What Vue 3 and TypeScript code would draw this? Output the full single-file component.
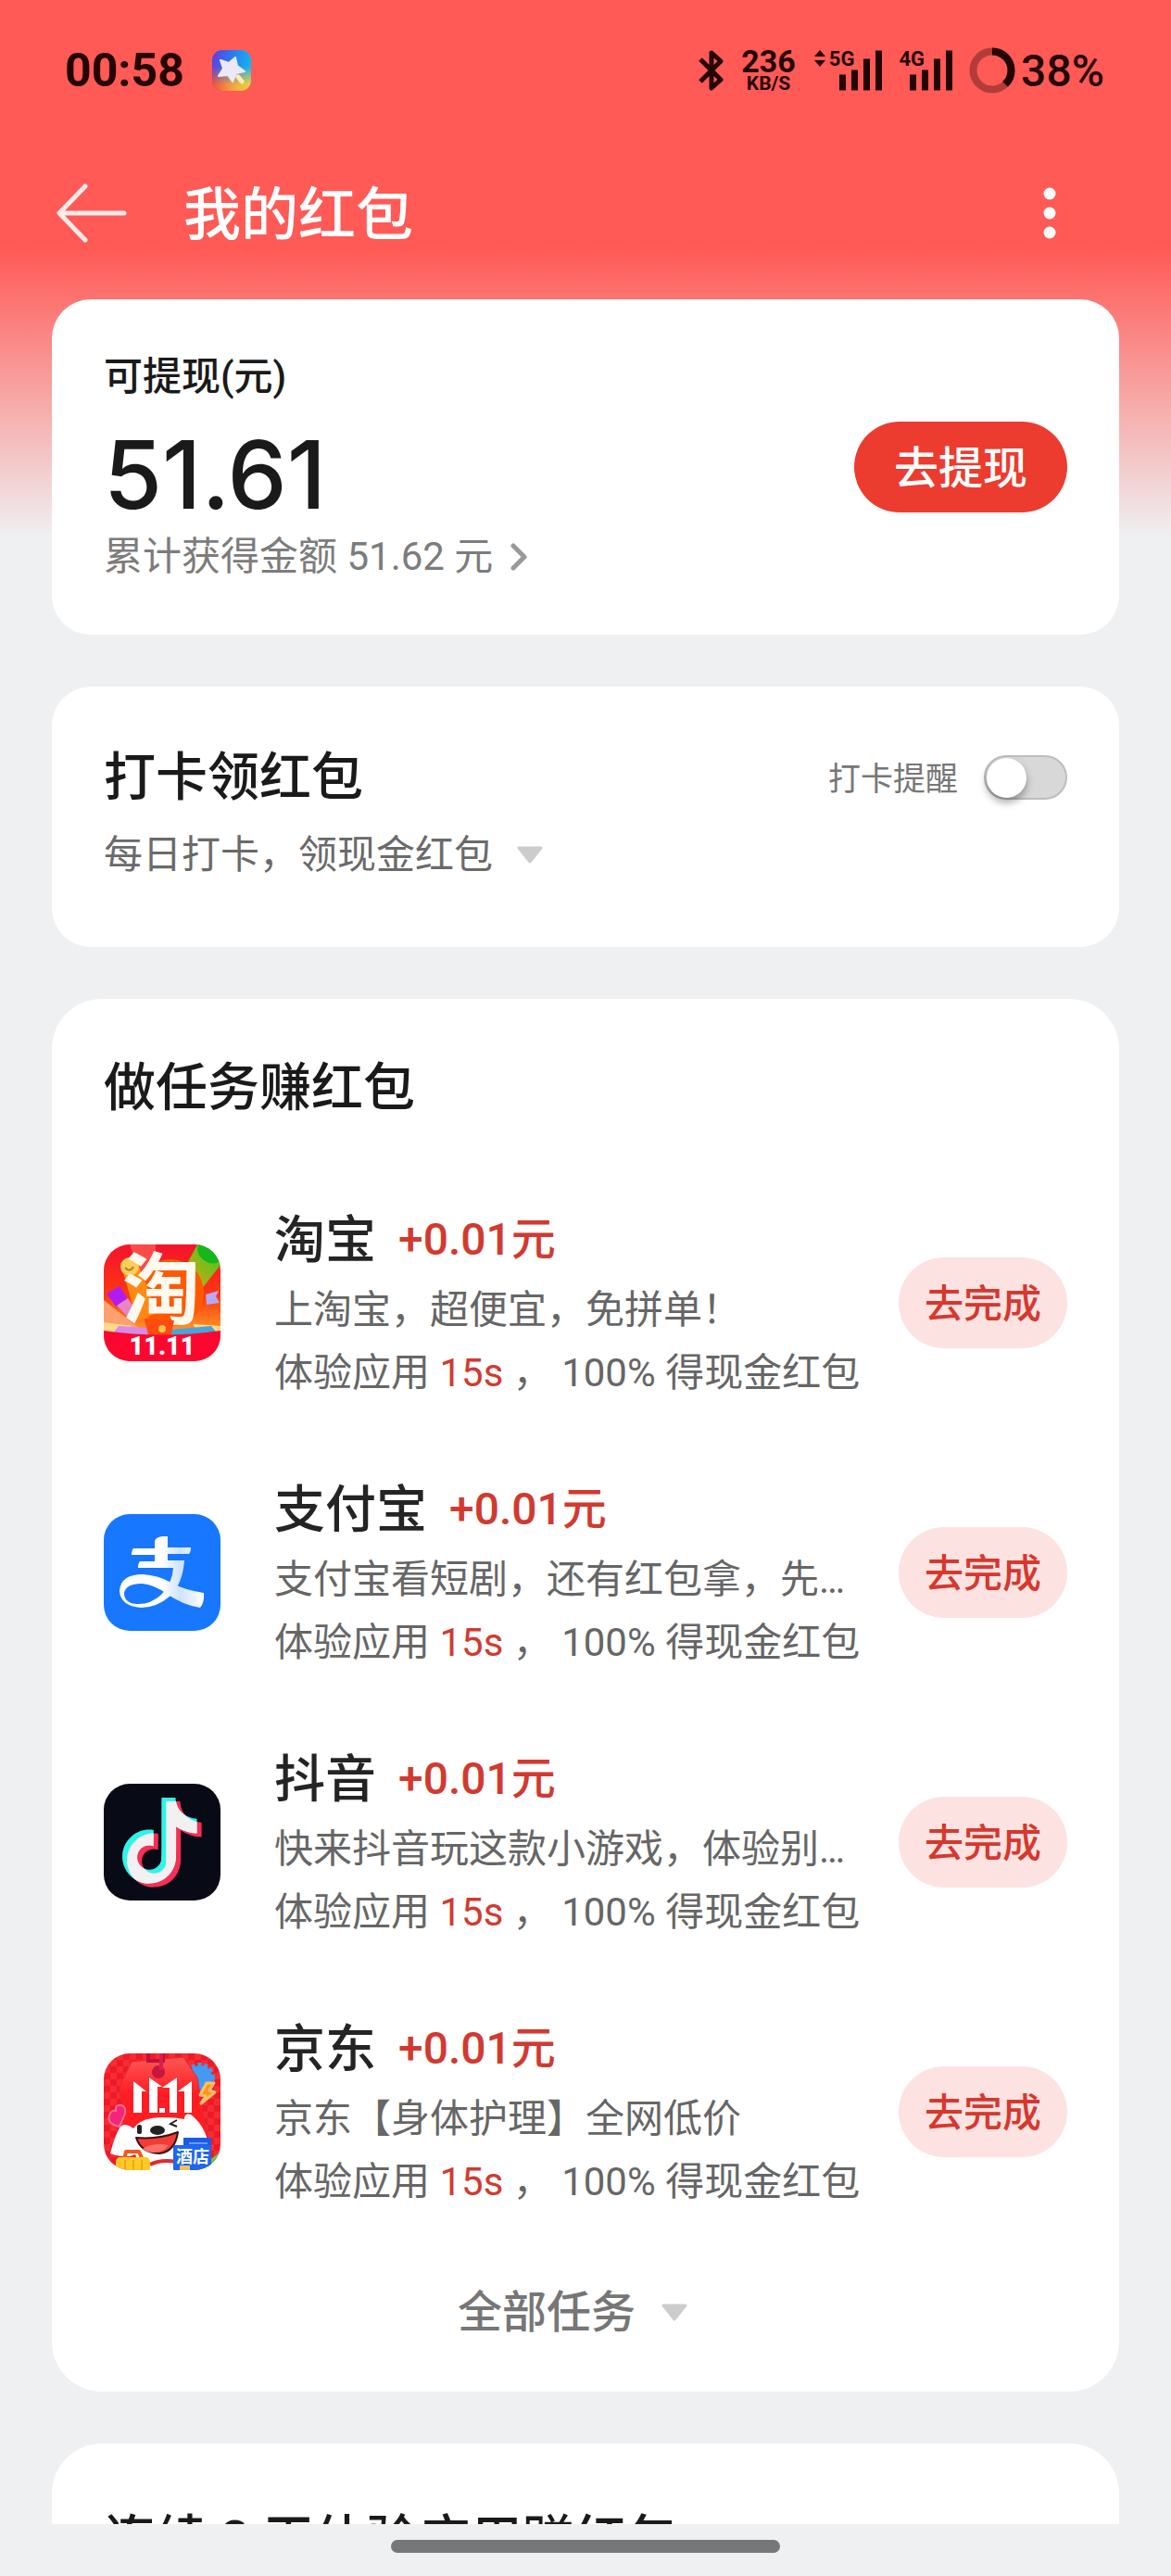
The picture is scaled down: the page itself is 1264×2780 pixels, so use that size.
<script setup lang="ts">
import { ref } from 'vue'

type AppIcon = 'taobao' | 'alipay' | 'douyin' | 'jd'

interface Task {
  id: AppIcon
  name: string
  reward: string
  slogan: string
}

const tasks: Task[] = [
  { id: 'taobao', name: '淘宝', reward: '+0.01元', slogan: '上淘宝，超便宜，免拼单！' },
  { id: 'alipay', name: '支付宝', reward: '+0.01元', slogan: '支付宝看短剧，还有红包拿，先…' },
  { id: 'douyin', name: '抖音', reward: '+0.01元', slogan: '快来抖音玩这款小游戏，体验别…' },
  { id: 'jd', name: '京东', reward: '+0.01元', slogan: '京东【身体护理】全网低价' },
]

const remind = ref(false)
const notePath =
  'M12.525.02c1.31-.02 2.61-.01 3.91-.02.08 1.53.63 3.09 1.75 4.17 1.12 1.11 2.7 1.62 4.24 1.79v4.03c-1.44-.05-2.89-.35-4.2-.97-.57-.26-1.1-.59-1.62-.93-.01 2.92.01 5.84-.02 8.75-.08 1.4-.54 2.79-1.35 3.94-1.31 1.92-3.58 3.17-5.91 3.21-1.43.08-2.86-.31-4.08-1.03-2.02-1.19-3.44-3.37-3.65-5.71-.02-.5-.03-1-.01-1.49.18-1.9 1.12-3.72 2.58-4.96 1.66-1.44 3.98-2.13 6.15-1.72.02 1.48-.04 2.96-.04 4.44-.99-.32-2.15-.23-3.02.37-.63.41-1.11 1.04-1.36 1.75-.21.51-.15 1.07-.14 1.61.24 1.64 1.82 3.02 3.5 2.87 1.12-.01 2.19-.66 2.77-1.61.19-.33.4-.67.41-1.06.1-1.79.06-3.57.07-5.36.01-4.03-.01-8.05.02-12.07z'
</script>

<template>
  <div class="screen">
    <div class="status">
      <span class="clock">00:58</span>
      <svg class="notice" width="42" height="44" viewBox="0 0 42 44" aria-hidden="true">
        <defs>
          <linearGradient id="n-top" x1="0" y1="0" x2="1" y2="0.3">
            <stop offset="0" stop-color="#6a35d8" />
            <stop offset="0.5" stop-color="#2a7af0" />
            <stop offset="1" stop-color="#12b4f2" />
          </linearGradient>
          <linearGradient id="n-bottom" x1="0" y1="0" x2="1" y2="0">
            <stop offset="0" stop-color="#f0503a" />
            <stop offset="0.5" stop-color="#f5a040" />
            <stop offset="1" stop-color="#f4d23c" />
          </linearGradient>
          <linearGradient id="n-fade" x1="0" y1="0" x2="0" y2="1">
            <stop offset="0.4" stop-color="#fff" stop-opacity="0" />
            <stop offset="0.85" stop-color="#fff" />
          </linearGradient>
          <mask id="n-mask"><rect width="42" height="44" fill="url(#n-fade)" /></mask>
        </defs>
        <rect width="42" height="44" rx="11" fill="url(#n-top)" />
        <rect width="42" height="44" rx="11" fill="url(#n-bottom)" mask="url(#n-mask)" />
        <path d="M25 8l2 9 8 6-9 2-4 9-5-7-10 1 5-8-3-9 9 3z" fill="#ece8f8" stroke="#ece8f8" stroke-width="2" stroke-linejoin="round" />
        <path d="M28 29l4 5" stroke="#fbeeb0" stroke-width="5" stroke-linecap="round" />
      </svg>
      <div class="status-right">
        <svg width="28" height="44" viewBox="0 0 28 44" aria-hidden="true">
          <path d="M2 10l22 22-10 9V3l10 9L2 34" fill="none" stroke="currentColor" stroke-width="5" stroke-linejoin="round" />
        </svg>
        <span class="speed"><b>236</b><small>KB/S</small></span>
        <span class="signal">
          <svg class="arrows" width="12" height="18" viewBox="0 0 12 18" aria-hidden="true">
            <path d="M6 0l6 7H0zM6 18l6-7H0z" fill="currentColor" />
          </svg>
          <span class="net">5G</span>
          <svg width="46" height="44" viewBox="0 0 46 44" aria-hidden="true">
            <path d="M3.500 30v10M16.500 25v15M29.500 13v27M42.500 4v36" stroke="currentColor" stroke-width="7" stroke-linecap="square" />
          </svg>
        </span>
        <span class="signal">
          <span class="net">4G</span>
          <svg width="46" height="44" viewBox="0 0 46 44" aria-hidden="true">
            <path d="M3.500 30v10M16.500 25v15M29.500 13v27M42.500 4v36" stroke="currentColor" stroke-width="7" stroke-linecap="square" />
          </svg>
        </span>
        <span class="battery">
          <svg width="50" height="50" viewBox="0 0 50 50" aria-hidden="true">
            <circle cx="25" cy="25" r="20.500" fill="none" stroke="currentColor" stroke-opacity="0.35" stroke-width="8" />
            <circle cx="25" cy="25" r="20.500" fill="none" stroke="currentColor" stroke-width="8" pathLength="100" stroke-dasharray="38 62" transform="rotate(-90 25 25)" />
          </svg>
          38%
        </span>
      </div>
    </div>

    <header class="nav">
      <button class="icon-button" type="button" aria-label="返回">
        <svg width="78" height="64" viewBox="0 0 78 64">
          <path d="M32 3L4 32l28 29M5 32h69" fill="none" stroke="#fff" stroke-opacity="0.88" stroke-width="5" stroke-linecap="round" stroke-linejoin="round" />
        </svg>
      </button>
      <h1>我的红包</h1>
      <button class="icon-button more" type="button" aria-label="更多">
        <svg width="14" height="56" viewBox="0 0 14 56" fill="#fff">
          <circle cx="7" cy="7" r="6.500" /><circle cx="7" cy="28" r="6.500" /><circle cx="7" cy="49" r="6.500" />
        </svg>
      </button>
    </header>

    <main>
      <section class="card balance">
        <div>
          <div class="label">可提现(元)</div>
          <div class="amount">51.61</div>
          <a class="total" href="#history">累计获得金额 51.62 元
            <svg width="20" height="30" viewBox="0 0 20 30" aria-hidden="true">
              <path d="M4 3l12 12L4 27" fill="none" stroke="#999" stroke-width="5" stroke-linecap="round" stroke-linejoin="round" />
            </svg>
          </a>
        </div>
        <button class="withdraw" type="button">去提现</button>
      </section>

      <section class="card checkin">
        <div class="checkin-head">
          <h2>打卡领红包</h2>
          <label class="remind">
            <span>打卡提醒</span>
            <input v-model="remind" class="switch" type="checkbox" role="switch" />
          </label>
        </div>
        <button class="expand" type="button">每日打卡，领现金红包
          <svg width="28" height="20" viewBox="0 0 28 20" aria-hidden="true"><path d="M2 2h24L14 17z" fill="#ccc" stroke="#ccc" stroke-width="3" stroke-linejoin="round" /></svg>
        </button>
      </section>

      <section class="card tasks">
        <h2>做任务赚红包</h2>
        <ul>
          <li v-for="task in tasks" :key="task.id">
            <svg v-if="task.id === 'taobao'" class="logo" viewBox="0 0 126 126" aria-hidden="true">
              <defs>
                <linearGradient id="tb-bg" x1="0" y1="0" x2="0" y2="1">
                  <stop offset="0" stop-color="#f5122c" /><stop offset="0.45" stop-color="#fb3a12" /><stop offset="0.75" stop-color="#ff9a28" />
                </linearGradient>
                <linearGradient id="tb-green" x1="1" y1="0" x2="0" y2="1">
                  <stop offset="0" stop-color="#2fd01c" /><stop offset="0.6" stop-color="#e0a018" /><stop offset="1" stop-color="#ff6a10" />
                </linearGradient>
              </defs>
              <rect width="126" height="126" fill="url(#tb-bg)" />
              <path d="M28 0h28v20L38 30z" fill="#fb4a48" />
              <path d="M101 0h25v22L84 76 66 66z" fill="url(#tb-green)" />
              <ellipse cx="114" cy="9" rx="14" ry="10" fill="#14b81c" transform="rotate(35 114 9)" />
              <path d="M0 60l40 32H0z" fill="#fda070" />
              <circle cx="72" cy="52" r="36" fill="#ff5a00" />
              <path d="M18 20l20 4 20 50-22 8z" fill="#ff8a14" />
              <circle cx="28" cy="24" r="10" fill="#f9cf5a" />
              <path d="M23 25q5 6 9-1" fill="none" stroke="#c07a20" stroke-width="2" />
              <path d="M3 53l14-8 9 14-12 9z" fill="#b01cf0" /><path d="M14 66l12-8 8 12-6 10z" fill="#e884c8" />
              <path d="M110 54l14-4-3 6 4 7-14 2z" fill="#b8a8f4" />
              <path d="M0 84l30 4-24 12-6-2zM126 88l-30-2 10 14h20z" fill="#ffd98a" />
              <path d="M16 88l44 3-8 10H6z" fill="#d88ae8" /><path d="M70 92l46-4 10 12H74z" fill="#4aa4d8" />
              <text x="62" y="79" text-anchor="middle" class="taobao-char">淘</text>
              <path d="M44 80l32 2-4 18-24-2z" fill="#ff4a12" />
              <circle cx="63" cy="91" r="4" fill="#ffc64a" />
              <path d="M0 93q63 9 126 0v33H0z" fill="#fa0830" />
              <text x="63" y="119" text-anchor="middle" class="taobao-date">11.11</text>
            </svg>
            <svg v-else-if="task.id === 'alipay'" class="logo" viewBox="0 0 126 126" aria-hidden="true">
              <defs>
                <linearGradient id="ali-tail" x1="0" y1="0" x2="1" y2="0">
                  <stop offset="0.5" stop-color="#fff" /><stop offset="0.72" stop-color="#cfe2ff" /><stop offset="1" stop-color="#fff" />
                </linearGradient>
              </defs>
              <rect width="126" height="126" fill="#1777ff" />
              <path d="M55 29q1-4 8-5h6v12h25q0 5-2 7H69v7h18q-2 26-16 39-14 12-31 12-22-2-23-18 1-18 25-18 17 1 31 9 14 8 35 11 1 10-4 16-19-3-36-15-14-10-27-11-17 0-19 10 0 11 13 12 15 1 27-10 12-12 13-29H37q0-5 2-7h16v-7H30q0-5 2-7h23z" fill="url(#ali-tail)" />
            </svg>
            <svg v-else-if="task.id === 'douyin'" class="logo" viewBox="0 0 126 126" aria-hidden="true">
              <defs>
                <clipPath id="dy-clip"><path :d="notePath" transform="translate(19 19) scale(3.860)" /></clipPath>
              </defs>
              <rect width="126" height="126" fill="#080a15" />
              <path :d="notePath" transform="translate(19 19) scale(3.860)" fill="#fb2c56" />
              <path :d="notePath" transform="translate(14 15) scale(3.860)" fill="#2ef4ea" />
              <g clip-path="url(#dy-clip)">
                <path :d="notePath" transform="translate(14 15) scale(3.860)" fill="#f2f0f1" />
              </g>
            </svg>
            <svg v-else class="logo" viewBox="0 0 126 126" aria-hidden="true">
              <defs>
                <pattern id="jd-check" width="14" height="14" patternUnits="userSpaceOnUse">
                  <rect width="14" height="14" fill="#ee1a26" /><path d="M0 0h7v7H0zM7 7h7v7H7z" fill="#f62c34" />
                </pattern>
                <linearGradient id="jd-tag" x1="0" y1="0" x2="0" y2="1">
                  <stop offset="0" stop-color="#fc5654" /><stop offset="0.5" stop-color="#ff1c22" />
                </linearGradient>
              </defs>
              <rect width="126" height="126" fill="url(#jd-check)" />
              <circle cx="104" cy="26" r="13" fill="#449af0" />
              <circle cx="104" cy="26" r="14" fill="none" stroke="#449af0" stroke-width="4" stroke-dasharray="4 3" />
              <path d="M30 9l56-5 15 22 10 60H22L17 36z" fill="url(#jd-tag)" stroke="#e02a32" stroke-width="1" />
              <path d="M48 0v8h16V0" fill="none" stroke="#c2103c" stroke-width="4" />
              <circle cx="59" cy="20" r="7" fill="#c81440" /><path d="M62 0v18" stroke="#d82048" stroke-width="4" />
              <path d="M32 30l14 11h-5v23h-9zM49 26l14 10h-5v28h-9zM63 37l16-11v38h-8V37zM80 41l15-11v34h-8V41z" fill="#fff" />
              <rect x="60" y="59" width="6" height="5" fill="#fff" />
              <path d="M111 32l-7 13 6 1-5 8 15-12-6-2 5-8z" fill="#ff9418" stroke="#ffc06a" stroke-width="3" stroke-linejoin="round" />
              <path d="M17 79Q3 76 6 67q2-6 7-5-1-7 6-6 5 1 4 9z" fill="#f4247c" stroke="#fa708c" stroke-width="2" />
              <path d="M18 79q5-5 14 2 8-12 32-12 15 0 23 2 0-7 7-5 13 10 18 27l-10 33H46q-8-5-12-17-10 5-27-1 5-20 11-29z" fill="#fff" />
              <rect x="36" y="77" width="5" height="10" rx="2" fill="#222" /><ellipse cx="58" cy="83" rx="8" ry="5" fill="#222" />
              <path d="M79 72l-7 4 7 3" fill="none" stroke="#222" stroke-width="2" />
              <path d="M35 91q24 2 45-6-3 21-20 23-20-1-25-17z" fill="#f23c36" stroke="#391010" stroke-width="2" stroke-linejoin="round" />
              <path d="M42 103q10-7 28-4-6 9-18 8-6-1-10-4z" fill="#fb7068" />
              <path d="M50 120q12-6 28-3" fill="none" stroke="#e02a32" stroke-width="4" />
              <path d="M22 115l2-9h14l4 9" fill="none" stroke="#f4581c" stroke-width="4" stroke-linejoin="round" />
              <rect x="13" y="112" width="37" height="18" rx="5" fill="#ffc928" /><path d="M23 115v11M32 115v11M41 115v11" stroke="#f2a810" stroke-width="2" />
              <path d="M116 114l10-8v20h-10z" fill="#5ccf4c" />
              <path d="M86 91h30v35H86z" fill="#1a5ce8" /><path d="M92 97h20" stroke="#6a9cff" stroke-width="2" />
              <rect x="75" y="99" width="41" height="27" rx="1" fill="#1c66f0" />
              <rect x="82" y="121" width="11" height="5" fill="#f0c060" />
              <text x="96" y="118" text-anchor="middle" class="jd-hotel">酒店</text>
            </svg>

            <div class="info">
              <h3>{{ task.name }}<em>{{ task.reward }}</em></h3>
              <p>{{ task.slogan }}</p>
              <p>体验应用 <strong>15s</strong> ， 100% 得现金红包</p>
            </div>
            <button class="go" type="button">去完成</button>
          </li>
        </ul>
        <button class="all" type="button">全部任务
          <svg width="28" height="20" viewBox="0 0 28 20" aria-hidden="true"><path d="M2 2h24L14 17z" fill="#ccc" stroke="#ccc" stroke-width="3" stroke-linejoin="round" /></svg>
        </button>
      </section>

      <section class="card streak">
        <h2>连续 3 天体验应用赚红包</h2>
      </section>
    </main>

    <footer><i class="handle"></i></footer>
  </div>
</template>

<style>
body {
  margin: 0;
}
</style>

<style scoped>
.screen {
  display: flex;
  flex-direction: column;
  height: 100vh;
  overflow: hidden;
  background: linear-gradient(#ff5a56 270px, #eff0f2 580px);
  color: #1a1a1a;
  font-family: Roboto, 'Noto Sans CJK SC', sans-serif;
  font-size: 42px;
}

h1, h2, h3, p, ul {
  margin: 0;
  padding: 0;
  font-weight: 500;
}

button {
  border: 0;
  padding: 0;
  background: none;
  color: inherit;
  font: inherit;
  cursor: pointer;
}

svg {
  display: block;
  flex: none;
}

.status {
  display: flex;
  flex: none;
  align-items: center;
  height: 152px;
  padding: 0 72px 0 70px;
  color: #240504;
}

.clock {
  font-size: 50px;
  font-weight: 700;
}

.notice {
  margin-left: 30px;
}

.status-right {
  display: flex;
  align-items: center;
  margin-left: auto;
}

.speed {
  display: flex;
  flex-direction: column;
  align-items: center;
  margin: 0 20px 0 18px;
}

.speed b {
  font-size: 34px;
  line-height: 28px;
}

.speed small {
  font-size: 21px;
  font-weight: 700;
  line-height: 20px;
}

.signal {
  display: flex;
  align-items: flex-start;
  margin-right: 18px;
}

.arrows {
  margin-right: 4px;
}

.net {
  margin-right: -16px;
  font-size: 22px;
  font-weight: 700;
  line-height: 20px;
}

.battery {
  display: flex;
  align-items: center;
  gap: 6px;
  font-size: 48px;
  font-weight: 500;
}

.nav {
  display: flex;
  flex: none;
  align-items: center;
  height: 156px;
  padding: 0 124px 0 60px;
  color: #fff;
}

.nav h1 {
  flex: 1;
  margin-left: 60px;
  padding-bottom: 6px;
  font-size: 62px;
}

main {
  display: flex;
  flex: 1;
  flex-direction: column;
  gap: 56px;
  min-height: 0;
  overflow: hidden;
  padding: 15px 56px 0;
}

.card {
  flex: none;
  border-radius: 42px;
  background: #fff;
}

h2 {
  font-size: 56px;
  line-height: 80px;
}

.balance {
  display: flex;
  align-items: center;
  justify-content: space-between;
  padding: 54px 56px 54px;
}

.label {
  font-weight: 500;
  line-height: 60px;
}

.amount {
  margin-top: 16px;
  font-family: Inter, sans-serif;
  font-size: 102px;
  font-weight: 500;
  line-height: 118px;
}

.total {
  display: flex;
  align-items: center;
  gap: 18px;
  color: #7c7c7c;
  line-height: 60px;
  text-decoration: none;
}

.withdraw {
  width: 230px;
  height: 98px;
  padding-bottom: 6px;
  border-radius: 49px;
  background: #ec3b2f;
  color: #fff;
  font-size: 48px;
  font-weight: 500;
}

.checkin {
  padding: 58px 56px 67px;
}

.checkin-head {
  display: flex;
  align-items: center;
  justify-content: space-between;
}

.remind {
  display: flex;
  align-items: center;
  gap: 28px;
  color: #777;
  font-size: 35px;
}

.remind span {
  padding-bottom: 4px;
}

.switch {
  display: flex;
  align-items: center;
  width: 90px;
  height: 48px;
  margin: 0;
  padding: 0 1px;
  box-sizing: border-box;
  border: 2px solid #bdbdbd;
  border-radius: 24px;
  background: #d8d8d8;
  appearance: none;
}

.switch::before {
  width: 43px;
  height: 43px;
  border-radius: 50%;
  background: #fff;
  box-shadow: 0 5px 8px rgb(0 0 0 / 35%);
  content: '';
}

.switch:checked {
  justify-content: flex-end;
  background: #ec3b2f;
}

.expand {
  display: flex;
  align-items: center;
  gap: 26px;
  margin-top: 12px;
  color: #6a6a6a;
  line-height: 64px;
}

.tasks {
  padding: 56px 56px 45px;
  border-radius: 54px;
}

.tasks ul {
  display: flex;
  flex-direction: column;
  gap: 71px;
  margin: 82px 0 67px;
  list-style: none;
}

.tasks li {
  display: flex;
  align-items: center;
}

.logo {
  width: 126px;
  height: 126px;
  border-radius: 28px;
}

.info {
  flex: 1;
  min-width: 0;
  margin-left: 58px;
  white-space: nowrap;
}

.info h3 {
  display: flex;
  align-items: center;
  gap: 24px;
  color: #242424;
  font-size: 55px;
  line-height: 84px;
}

.info em {
  color: #d13a30;
  font-size: 48px;
  font-style: normal;
}

.info p {
  color: #666;
  font-weight: 400;
  line-height: 68px;
}

.info strong {
  color: #d13a30;
  font-weight: 400;
}

.go {
  flex: none;
  width: 182px;
  height: 98px;
  padding-bottom: 6px;
  border-radius: 49px;
  background: #fce2e1;
  color: #d6382e;
  font-weight: 500;
}

.all {
  display: flex;
  align-items: center;
  justify-content: center;
  gap: 28px;
  width: 100%;
  padding-right: 28px;
  color: #767676;
  font-size: 48px;
  font-weight: 500;
  line-height: 80px;
}

.streak {
  padding: 64px 56px;
  border-radius: 54px;
}

footer {
  display: flex;
  flex: none;
  justify-content: center;
  height: 56px;
  background: #eff0f2;
}

.handle {
  width: 420px;
  height: 14px;
  margin-top: 17px;
  border-radius: 7px;
  background: #767778;
}

.taobao-char {
  fill: #fffaf0;
  font-size: 84px;
  font-weight: 700;
}

.taobao-date {
  fill: #fff;
  font-size: 27px;
  font-weight: 900;
}

.jd-hotel {
  fill: #fff;
  font-size: 18px;
  font-weight: 700;
}
</style>
